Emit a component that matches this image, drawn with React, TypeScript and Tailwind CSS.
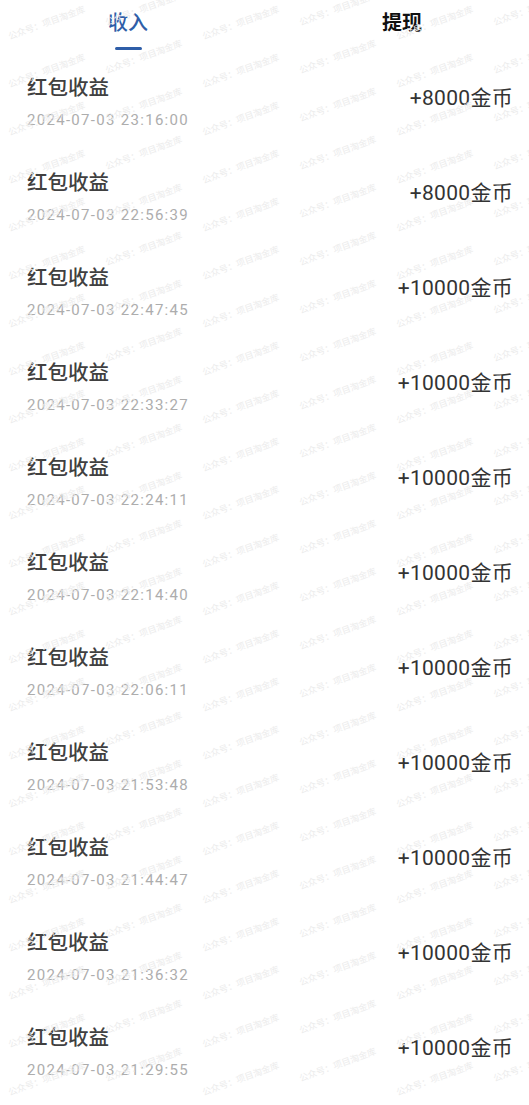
import React from "react";

type IncomeRecord = {
  title: string;
  time: string;
  amount: number;
};

const RECORDS: IncomeRecord[] = [
  { title: "红包收益", time: "2024-07-03 23:16:00", amount: 8000 },
  { title: "红包收益", time: "2024-07-03 22:56:39", amount: 8000 },
  { title: "红包收益", time: "2024-07-03 22:47:45", amount: 10000 },
  { title: "红包收益", time: "2024-07-03 22:33:27", amount: 10000 },
  { title: "红包收益", time: "2024-07-03 22:24:11", amount: 10000 },
  { title: "红包收益", time: "2024-07-03 22:14:40", amount: 10000 },
  { title: "红包收益", time: "2024-07-03 22:06:11", amount: 10000 },
  { title: "红包收益", time: "2024-07-03 21:53:48", amount: 10000 },
  { title: "红包收益", time: "2024-07-03 21:44:47", amount: 10000 },
  { title: "红包收益", time: "2024-07-03 21:36:32", amount: 10000 },
  { title: "红包收益", time: "2024-07-03 21:29:55", amount: 10000 },
];

const FONT = "font-['Roboto','Noto_Sans_CJK_SC',sans-serif]";

// faint tiled watermark laid over the list
function Watermark() {
  const cols = 6;
  const rows = 23;
  const marks: { left: number; top: number; key: string }[] = [];
  for (let r = 0; r < rows; r += 1) {
    for (let c = 0; c < cols; c += 1) {
      marks.push({ left: 6 + c * 97, top: 18 + r * 48 - (c % 2) * 14, key: `${r}-${c}` });
    }
  }
  return (
    <div className="pointer-events-none absolute inset-0 overflow-hidden">
      {marks.map((m) => (
        <span
          key={m.key}
          className="absolute -rotate-[20deg] whitespace-nowrap text-[9px] leading-none text-[#ececec] font-['Noto_Sans_CJK_SC',sans-serif]"
          style={{ left: m.left, top: m.top }}
        >
          公众号：项目淘金库
        </span>
      ))}
    </div>
  );
}

function RecordRow({ record }: { record: IncomeRecord }) {
  return (
    <li className="flex h-[95px] items-start justify-between pl-[27px] pr-[16px] pt-[24px]">
      <div className="flex flex-col">
        <span className="text-[20.5px] leading-[28px] font-medium text-[#404040]">{record.title}</span>
        <span className="mt-[8px] text-[15px] leading-[20px] tracking-[1.3px] text-[#adadad]">
          {record.time}
        </span>
      </div>
      <span className="mt-[10px] text-[21px] leading-[28px] tracking-[0.3px] text-[#333333]">
        +{record.amount}金币
      </span>
    </li>
  );
}

export default function App() {
  return (
    <div className={`relative min-h-[1105px] w-full bg-white ${FONT}`}>
      <nav className="flex h-[50px]">
        <div className="flex w-[256px] shrink-0 flex-col items-center pt-[9px]">
          <span className="text-[20px] leading-[28px] font-medium text-[#2f5ea8]">收入</span>
          <span className="mt-[10px] h-[3px] w-[27px] rounded-full bg-[#2f5ea8]" />
        </div>
        <div className="flex flex-1 flex-col items-center pl-[19px] pt-[9px]">
          <span className="text-[20px] leading-[28px] font-bold text-[#111111]">提现</span>
        </div>
      </nav>
      <ul>
        {RECORDS.map((record) => (
          <RecordRow key={record.time} record={record} />
        ))}
      </ul>
      <Watermark />
    </div>
  );
}
